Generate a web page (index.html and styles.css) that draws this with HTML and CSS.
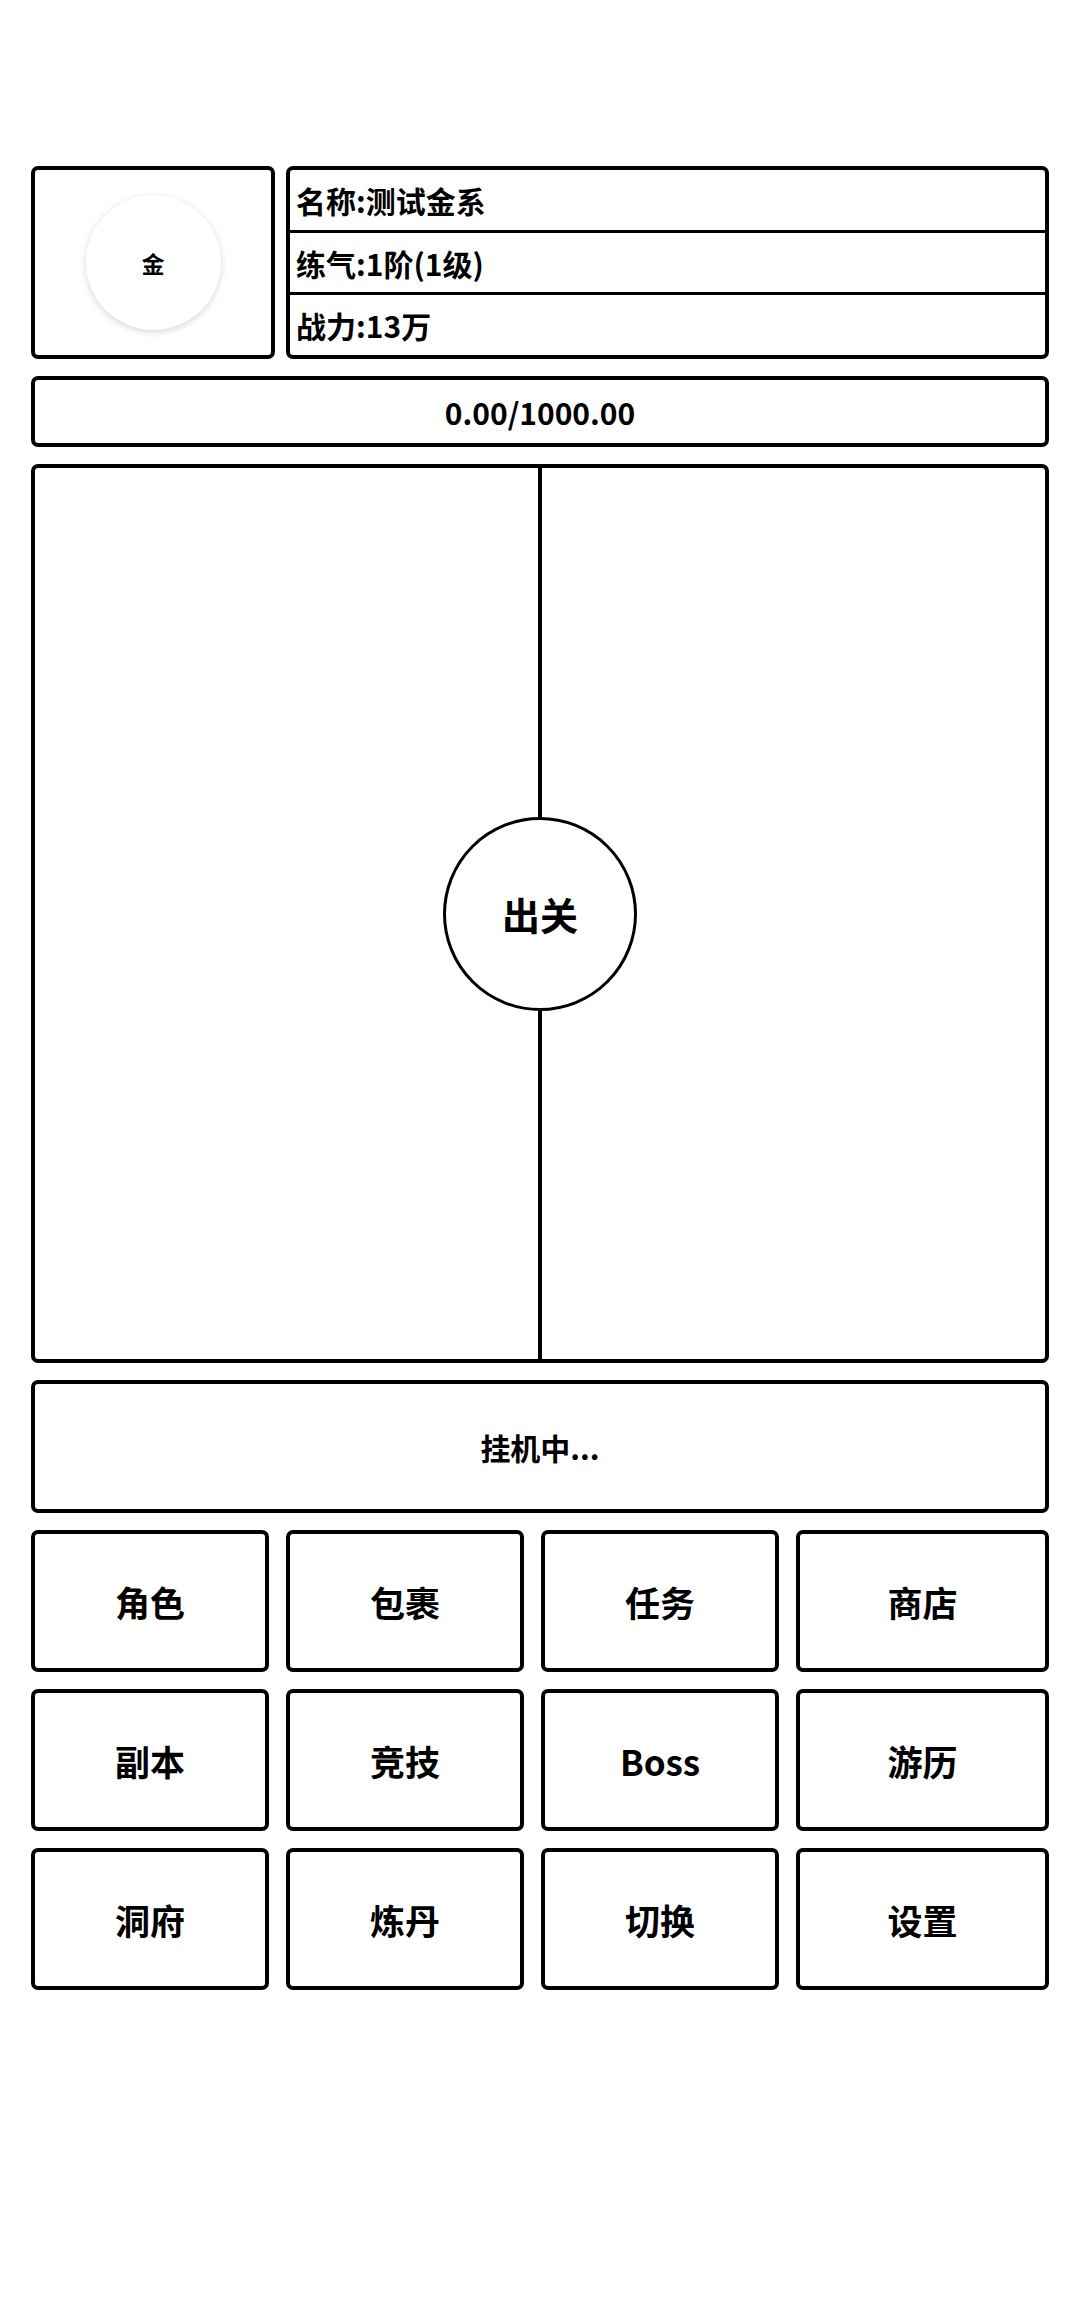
FILE: index.html
```html
<!DOCTYPE html>
<html lang="zh-CN">
<head>
<meta charset="utf-8">
<title>修炼</title>
<link rel="stylesheet" href="styles.css">
</head>
<body>
<div class="page">
  <div class="top-row">
    <div class="avatar-box">
      <div class="avatar">金</div>
    </div>
    <div class="info-box">
      <div class="info-row">名称:测试金系</div>
      <div class="info-row">练气:1阶(1级)</div>
      <div class="info-row">战力:13万</div>
    </div>
  </div>
  <div class="exp-bar">0.00/1000.00</div>
  <div class="battle">
    <div class="axis">
      <div class="axis-line"></div>
      <div class="exit-btn">出关</div>
      <div class="axis-line"></div>
    </div>
  </div>
  <div class="idle">挂机中...</div>
  <div class="menu">
    <div class="menu-btn">角色</div>
    <div class="menu-btn">包裹</div>
    <div class="menu-btn">任务</div>
    <div class="menu-btn">商店</div>
    <div class="menu-btn">副本</div>
    <div class="menu-btn">竞技</div>
    <div class="menu-btn">Boss</div>
    <div class="menu-btn">游历</div>
    <div class="menu-btn">洞府</div>
    <div class="menu-btn">炼丹</div>
    <div class="menu-btn">切换</div>
    <div class="menu-btn">设置</div>
  </div>
</div>
</body>
</html>
```

FILE: styles.css
```css
* {
  box-sizing: border-box;
}

html, body {
  margin: 0;
  padding: 0;
  background: #ffffff;
}

body {
  font-family: "Noto Sans CJK SC", "Noto Sans", sans-serif;
  font-weight: 700;
  color: #000000;
}

.page {
  padding: 166px 31px 0 31px;
  display: flex;
  flex-direction: column;
  gap: 17px;
}

.top-row {
  display: flex;
  gap: 11px;
  height: 193px;
}

.avatar-box {
  width: 244px;
  border: 4px solid #000;
  border-radius: 7px;
  display: flex;
  align-items: center;
  justify-content: center;
}

.avatar {
  width: 135px;
  height: 135px;
  border-radius: 50%;
  background: #fff;
  box-shadow: 0 2px 7px rgba(0, 0, 0, 0.16);
  display: flex;
  align-items: center;
  justify-content: center;
  font-size: 23px;
}

.info-box {
  flex: 1;
  border: 4px solid #000;
  border-radius: 7px;
  display: flex;
  flex-direction: column;
}

.info-row {
  flex: 1;
  display: flex;
  align-items: center;
  padding-left: 6px;
  font-size: 30px;
}

.info-row + .info-row {
  border-top: 3px solid #000;
}

.exp-bar {
  height: 71px;
  border: 4px solid #000;
  border-radius: 7px;
  display: flex;
  align-items: center;
  justify-content: center;
  font-size: 30px;
}

.battle {
  height: 899px;
  border: 4px solid #000;
  border-radius: 7px;
  display: flex;
  justify-content: center;
}

.axis {
  display: flex;
  flex-direction: column;
  align-items: center;
}

.axis-line {
  flex: 1;
  width: 4px;
  background: #000;
}

.exit-btn {
  width: 194px;
  height: 194px;
  border: 3px solid #000;
  border-radius: 50%;
  display: flex;
  align-items: center;
  justify-content: center;
  font-size: 38px;
}

.idle {
  height: 133px;
  border: 4px solid #000;
  border-radius: 7px;
  display: flex;
  align-items: center;
  justify-content: center;
  font-size: 30px;
}

.menu {
  display: grid;
  grid-template-columns: 238px 238px 238px 1fr;
  grid-auto-rows: 142px;
  column-gap: 17px;
  row-gap: 17px;
}

.menu-btn {
  border: 4px solid #000;
  border-radius: 7px;
  display: flex;
  align-items: center;
  justify-content: center;
  font-size: 35px;
}
```
